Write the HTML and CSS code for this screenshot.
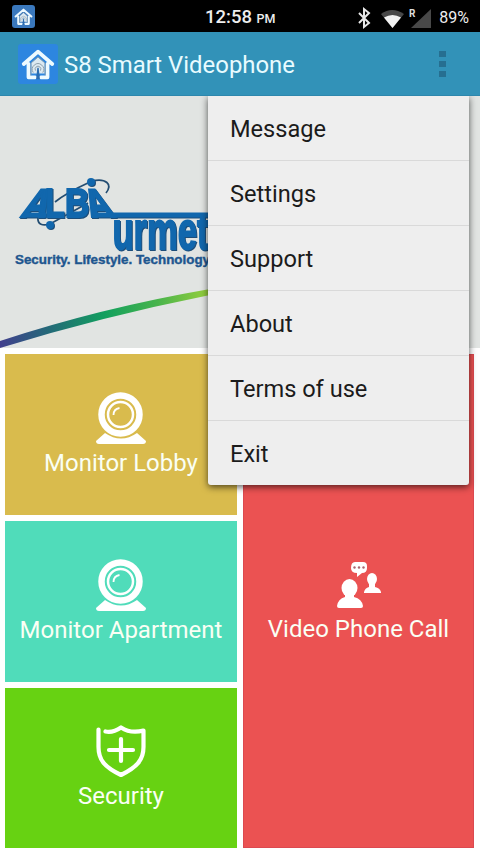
FILE: index.html
```html
<!DOCTYPE html>
<html lang="en">
<head>
<meta charset="utf-8">
<title>S8 Smart Videophone</title>
<link rel="stylesheet" href="styles.css">
</head>
<body>
<svg class="defs" aria-hidden="true">
  <symbol id="home" viewBox="0 0 40 40">
    <path d="M5 20 20 7l15 13M10 20v14h7M30 20v14h-7" fill="none" stroke="#eefaff" stroke-width="4" stroke-linejoin="round" stroke-linecap="round"/>
    <path d="M13 30V19l7-6 7 6v11z" fill="#dce9f1"/>
    <path d="M12.500 32V19l7.500-6.500 7.500 6.500v13" fill="none" stroke="#7f9bb0" stroke-width="1"/>
    <path d="M15 29a6 6 0 1 1 10 0M17.500 27a3 3 0 1 1 5 0" fill="none" stroke="#8b9da9" stroke-width="1"/>
    <path d="M19.300 24h1.400l1.300 12h-4z" fill="#2b6cb0"/>
  </symbol>
  <symbol id="webcam" viewBox="0 0 50 53">
    <path d="M9 41Q25 52 41 41L50 49Q50 52 47 52H3Q0 52 0 49z" fill="#fff"/>
    <circle cx="24.500" cy="22.500" r="19" fill="none" stroke="#fff" stroke-width="6.500"/>
    <circle cx="24.500" cy="22.500" r="12.500" fill="none" stroke="#fff" stroke-width="2.500"/>
    <path d="M17.500 23q0-6 6-7" fill="none" stroke="#fff" stroke-width="1.800"/>
  </symbol>
</svg>
<div class="screen">
  <div class="status">
    <svg class="status-app"><rect width="23" height="23" rx="3" fill="#3a78bd"/><use href="#home" x="1" y="1" width="21" height="21"/></svg>
    <div class="clock">12:58 <small>PM</small></div>
    <svg class="signals" viewBox="0 0 76 24">
      <path d="m2 7 10 10-5 4V3l5 4L2 17" fill="none" stroke="#e8e8e8" stroke-width="2"/>
      <path d="M24 8q11-8 23 0L35.500 22z" fill="#484848"/>
      <path d="M27 11.500q8.500-5 17 0L35.500 22z" fill="#f2f2f2"/>
      <path d="M74 3v19H54z" fill="#484848"/>
      <text x="52" y="11">R</text>
    </svg>
    <span class="battery">89%</span>
  </div>
  <header class="appbar">
    <svg class="app-icon"><rect width="40" height="40" rx="3" fill="#2d86e0"/><use href="#home" x="1" y="1" width="38" height="38"/></svg>
    <h1>S8 Smart Videophone</h1>
    <div class="overflow"><i></i><i></i><i></i></div>
  </header>
  <section class="banner">
    <svg viewBox="0 96 480 252">
      <defs><linearGradient id="swoosh" x1="0" x2="210" y1="0" y2="0" gradientUnits="userSpaceOnUse">
        <stop offset="0" stop-color="#413f8d"/><stop offset=".24" stop-color="#236b78"/><stop offset=".5" stop-color="#12a05e"/><stop offset=".75" stop-color="#48b44c"/><stop offset="1" stop-color="#98cf3c"/>
      </linearGradient></defs>
      <path d="M0 341Q100 308 210 289V295Q100 317 0 348z" fill="url(#swoosh)"/>
      <path d="M55 202Q66 193 90 182M92 181c14-3 21 3 14 12M38 217c-1 8 5 9 12 7l38-21" fill="none" stroke="#234d72" stroke-width="1.700"/>
      <g class="logo">
        <text transform="translate(19.500 217) skewX(-23) scale(.88 1)">A</text>
        <text transform="translate(45 217) scale(.8 1)">L</text>
        <text transform="translate(65 217) scale(.84 1)">B</text>
        <text transform="translate(91 217) skewX(23) scale(.88 1)">A</text>
        <path d="M24 212.500H46v5H24zM93 212.500H210v5H93z"/>
        <text class="urmet" transform="translate(112.500 249) scale(.64 1)">urmet</text>
        <circle cx="91" cy="182" r="4"/><circle cx="50" cy="225" r="4"/>
      </g>
      <text class="tagline" x="15" y="264" textLength="195" lengthAdjust="spacingAndGlyphs">Security. Lifestyle. Technology</text>
    </svg>
  </section>
  <main class="tiles">
    <div class="tile lobby"><svg class="cam"><use href="#webcam"/></svg><span>Monitor Lobby</span></div>
    <div class="tile call">
      <svg class="people" viewBox="0 0 44 48">
        <g fill="#fff"><ellipse cx="12.500" cy="26" rx="8" ry="9"/><path d="M8 31h9v4q8 2 9 9 0 2-2 2H2q-2 0-2-2 1-7 8-9z"/>
        <ellipse cx="35" cy="17" rx="5" ry="6"/><path d="M32 21h6v4q5 1 6 5v1H27v-1q1-4 5-5z"/>
        <path d="M18 0h8q4 0 4 4v2q0 5-5 5l-5 4v-4q-6 0-6-5 0-6 4-6z"/></g>
        <g fill="#aa6670"><circle cx="17.500" cy="5.500" r="1.200"/><circle cx="22" cy="5.500" r="1.200"/><circle cx="26.500" cy="5.500" r="1.200"/></g>
      </svg><span>Video Phone Call</span>
    </div>
    <div class="tile apartment"><svg class="cam"><use href="#webcam"/></svg><span>Monitor Apartment</span></div>
    <div class="tile security">
      <svg class="cam" viewBox="0 0 50 53"><path d="M2.500 4.500V22c0 13 6 20 22.500 28 16-8 22.500-15 22.500-28V5.500Q35 9 25 2.500 17 8 9.500 6.500M25 14v22M13 25h24" fill="none" stroke="#fff" stroke-width="4.200" stroke-linecap="round" stroke-linejoin="round"/></svg><span>Security</span>
    </div>
  </main>
  <nav class="menu"><a>Message</a><a>Settings</a><a>Support</a><a>About</a><a>Terms of use</a><a>Exit</a></nav>
</div>
</body>
</html>
```
FILE: styles.css
```css
* { box-sizing: border-box; }
body { margin: 0; background: #fff; font-family: Roboto, "Liberation Sans", sans-serif; }
.defs { position: absolute; width: 0; height: 0; }
.screen { position: relative; width: 480px; height: 854px; overflow: hidden; }
.status { height: 32px; background: #000; color: #eee; display: grid; grid-template-columns: 193px 95px 1fr auto; align-items: center; padding: 0 11px 0 12px; }
.status-app { width: 23px; height: 23px; margin-top: -1px; }
.clock { font-size: 18.5px; font-weight: 500; line-height: 30px; padding-top: 2px; white-space: nowrap; }
.clock small { font-size: 12.5px; }
.signals { width: 76px; height: 24px; margin-left: 57px; margin-top: 2px; }
.signals text { font-size: 10px; font-weight: 700; fill: #ddd; }
.battery { font-size: 16px; padding-top: 1px; }
.appbar { height: 64px; background: #3292b8; border-bottom: 1px solid #2d87ad; display: flex; align-items: center; padding: 0 33px 0 18px; }
.app-icon { width: 40px; height: 40px; }
h1 { margin: 3px 0 0 6px; flex: 1; font-size: 23.9px; line-height: 32px; font-weight: 400; color: #e8fbff; white-space: nowrap; }
.overflow { display: grid; gap: 4px; width: 8px; }
.overflow i { width: 7px; height: 6px; background: #266f91; }
.banner { height: 252px; background: #e1e4e2; }
.banner svg { display: block; width: 480px; height: 252px; }
.logo { fill: #1167ad; font: 700 40px "Liberation Sans", sans-serif; filter: drop-shadow(1px 1px 0 #1d4e7a); }
.logo text { stroke: #1167ad; stroke-width: 2px; }
.logo .urmet { font-size: 54px; stroke-width: 1.8px; }
.tagline { font: 700 13px "Liberation Sans", sans-serif; fill: #1e568f; stroke: #1e568f; stroke-width: .4px; }
.tiles { display: grid; grid-template-columns: 232px 231px; grid-template-rows: 161px 161px 160px; gap: 6px; height: 506px; padding: 6px 6px 0 5px; }
.tile { display: flex; flex-direction: column; align-items: center; padding-top: 38px; color: #fafff4; font-size: 24px; line-height: 28px; white-space: nowrap; }
.lobby { background: #d9bb4d; }
.apartment { background: #50dcba; }
.security { background: #67d212; padding-top: 37px; }
.call { grid-column: 2; grid-row: 1 / 4; background: #eb5252; border: 1px solid #dc4950; padding-top: 207px; }
.cam { width: 50px; height: 53px; margin-bottom: 4px; }
.people { width: 44px; height: 48px; margin-bottom: 5px; }
.menu { position: absolute; left: 208px; top: 96px; width: 261px; height: 389px; background: #eee; border-radius: 0 0 3px 3px; box-shadow: 0 2px 7px rgba(0,0,0,.65); clip-path: inset(0 -12px -15px -12px); }
.menu a { display: block; height: 65px; padding: 1px 22px 0; font-size: 23.6px; line-height: 64px; color: #1b1b1b; border-bottom: 1px solid #d9d9d9; }
.menu a:last-child { height: 64px; border: 0; }
```
